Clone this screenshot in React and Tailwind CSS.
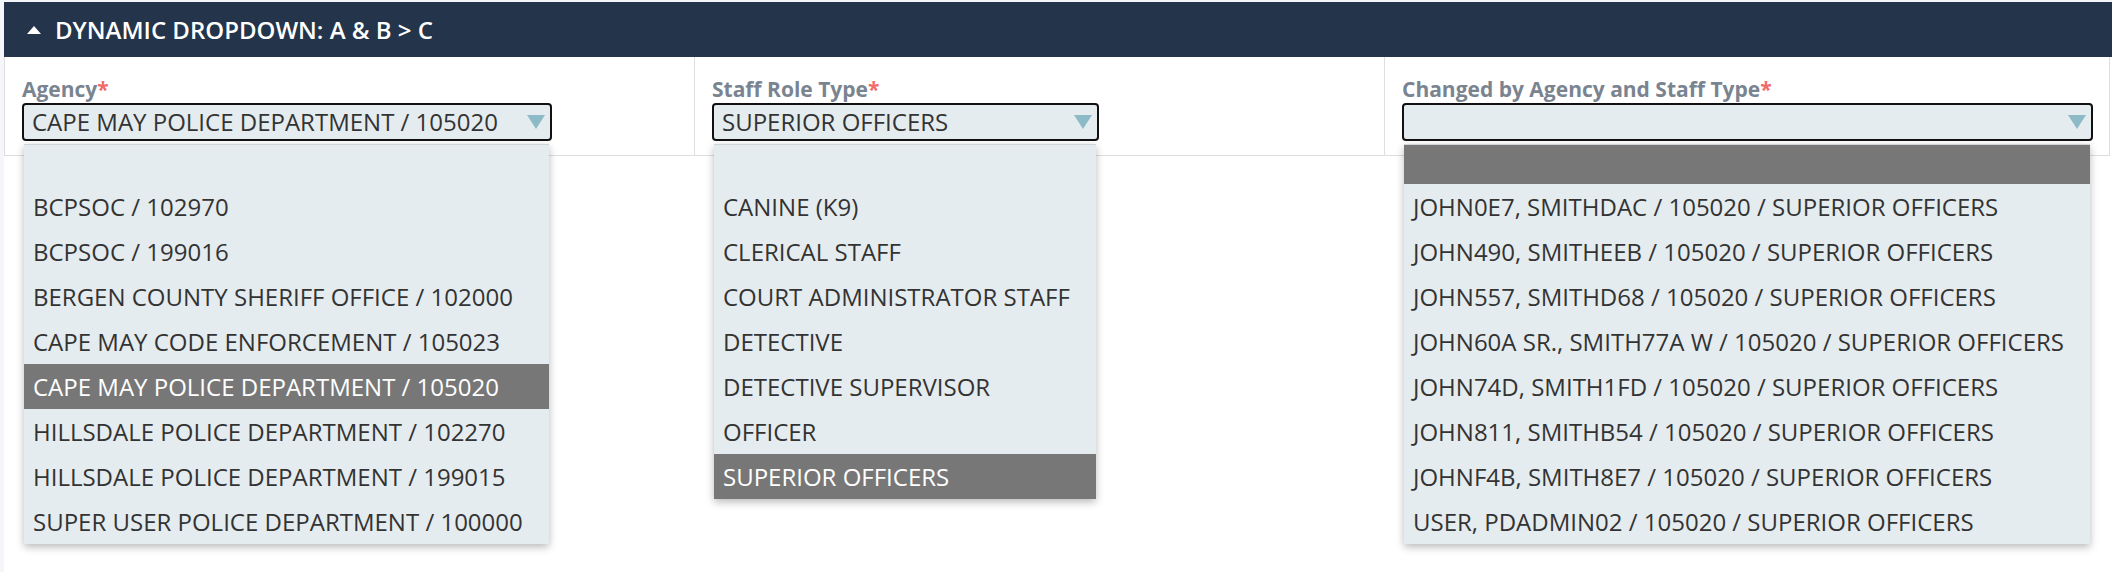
import React from "react";

const agencyOptions = [
  "BCPSOC / 102970",
  "BCPSOC / 199016",
  "BERGEN COUNTY SHERIFF OFFICE / 102000",
  "CAPE MAY CODE ENFORCEMENT / 105023",
  "CAPE MAY POLICE DEPARTMENT / 105020",
  "HILLSDALE POLICE DEPARTMENT / 102270",
  "HILLSDALE POLICE DEPARTMENT / 199015",
  "SUPER USER POLICE DEPARTMENT / 100000",
];

const roleOptions = [
  "CANINE (K9)",
  "CLERICAL STAFF",
  "COURT ADMINISTRATOR STAFF",
  "DETECTIVE",
  "DETECTIVE SUPERVISOR",
  "OFFICER",
  "SUPERIOR OFFICERS",
];

const staffOptions = [
  "JOHN0E7, SMITHDAC / 105020 / SUPERIOR OFFICERS",
  "JOHN490, SMITHEEB / 105020 / SUPERIOR OFFICERS",
  "JOHN557, SMITHD68 / 105020 / SUPERIOR OFFICERS",
  "JOHN60A SR., SMITH77A W / 105020 / SUPERIOR OFFICERS",
  "JOHN74D, SMITH1FD / 105020 / SUPERIOR OFFICERS",
  "JOHN811, SMITHB54 / 105020 / SUPERIOR OFFICERS",
  "JOHNF4B, SMITH8E7 / 105020 / SUPERIOR OFFICERS",
  "USER, PDADMIN02 / 105020 / SUPERIOR OFFICERS",
];

function Arrow() {
  return (
    <svg width="18" height="14" viewBox="0 0 18 14" className="shrink-0">
      <polygon points="0,0 18,0 9,14" fill="#8dbac7" />
    </svg>
  );
}

function Dropdown({ label, value, options, selected, emptySelected, widthClass }) {
  return (
    <div className="flex flex-col">
      <div className="h-[28px] leading-[28px] text-[21px] font-bold text-[#7a8490] whitespace-nowrap">
        {label}
        <span className="text-[#f26a6a]">*</span>
      </div>
      <div className={`relative ${widthClass}`}>
        <div className="h-[38px] rounded-[4px] border-2 border-[#111111] bg-[#e5ecef] flex items-center justify-between pl-[8px] pr-[5px]">
          <span className="text-[24px] leading-[34px] text-[#333333] whitespace-nowrap">{value}</span>
          <Arrow />
        </div>
        <div className="absolute top-[41px] left-[2px] right-[3px] z-10 bg-[#e5ecef] border-t border-[#cfd5d8] shadow-[0_3px_8px_rgba(0,0,0,0.28)]">
          <div className={`h-[39px] ${emptySelected ? "bg-[#777777]" : ""}`} />
          {options.map((o) => (
            <div
              key={o}
              className={`h-[45px] leading-[45px] px-[9px] text-[24px] whitespace-nowrap ${
                o === selected ? "bg-[#777777] text-white" : "text-[#333333]"
              }`}
            >
              {o}
            </div>
          ))}
        </div>
      </div>
    </div>
  );
}

export default function App() {
  return (
    <div
      className="w-[2112px] h-[572px] bg-[#f4f6f9] pl-[4px] pt-[2px] overflow-hidden"
      style={{ fontFamily: '"Open Sans", "Liberation Sans", sans-serif' }}
    >
      <div className="bg-white h-full flex flex-col">
        <div className="h-[55px] bg-[#24344a] flex items-center pl-[23px]">
          <svg width="14" height="8" viewBox="0 0 14 8">
            <polygon points="7,0 14,8 0,8" fill="#ffffff" />
          </svg>
          <span className="ml-[14px] text-[24px] font-semibold text-white whitespace-nowrap">
            DYNAMIC DROPDOWN: A &amp; B &gt; C
          </span>
        </div>
        <div className="w-[2106px] flex border-l border-r border-b border-[#dedede]">
          <div className="w-[690px] border-r border-[#dedede] pl-[17px] pt-[18px] pb-[14px]">
            <Dropdown
              label="Agency"
              value="CAPE MAY POLICE DEPARTMENT / 105020"
              options={agencyOptions}
              selected="CAPE MAY POLICE DEPARTMENT / 105020"
              widthClass="w-[530px]"
            />
          </div>
          <div className="w-[690px] border-r border-[#dedede] pl-[17px] pt-[18px] pb-[14px]">
            <Dropdown
              label="Staff Role Type"
              value="SUPERIOR OFFICERS"
              options={roleOptions}
              selected="SUPERIOR OFFICERS"
              widthClass="w-[387px]"
            />
          </div>
          <div className="flex-1 pl-[17px] pr-[16px] pt-[18px] pb-[14px]">
            <Dropdown
              label="Changed by Agency and Staff Type"
              value=""
              options={staffOptions}
              selected={null}
              emptySelected
              widthClass="w-full"
            />
          </div>
        </div>
      </div>
    </div>
  );
}
